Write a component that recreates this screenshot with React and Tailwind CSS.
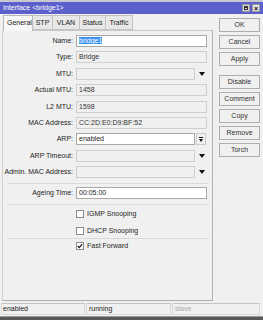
import React from "react";

function Arrow() {
  return (
    <svg width="6" height="4" viewBox="0 0 6 4" className="block">
      <path d="M0 0H6L3 4Z" fill="#111" />
    </svg>
  );
}

function Label({ children }) {
  return (
    <div className="w-[70px] shrink-0 text-right text-[7px] leading-[12px] text-[#1e1e1e] whitespace-nowrap">
      {children}
    </div>
  );
}

function RoField({ children, w = "w-[131px]" }) {
  return (
    <div className={`${w} h-[12px] border border-[#cfcfcf] bg-[#f0f0f0] text-[7px] leading-[10px] pl-[2px] text-[#333]`}>
      {children}
    </div>
  );
}

function Row({ label, children }) {
  return (
    <div className="flex items-center h-[12px]">
      <Label>{label}</Label>
      <div className="ml-[3px] flex items-center">{children}</div>
    </div>
  );
}

function Btn({ children }) {
  return (
    <div className="w-[41px] h-[14px] border border-[#adadad] bg-[#f0f0f0] text-[7px] leading-[12px] text-center text-[#333]">
      {children}
    </div>
  );
}

function Check({ checked, label }) {
  return (
    <div className="flex items-center h-[10px] pl-[73px]">
      <div className="w-[8px] h-[8px] border border-[#8c8c8c] bg-white flex items-center justify-center">
        {checked && (
          <svg width="6" height="6" viewBox="0 0 6 6" className="block">
            <path d="M0.8 3L2.3 4.6L5.2 1.2" stroke="#111" strokeWidth="1.2" fill="none" />
          </svg>
        )}
      </div>
      <span className="ml-[3px] text-[7px] leading-[10px] text-[#1e1e1e]">{label}</span>
    </div>
  );
}

function Sep({ className = "" }) {
  return <div className={`ml-[4px] w-[202px] h-px bg-[#dadada] ${className}`} />;
}

export default function App() {
  return (
    <div className="w-[263px] h-[320px] bg-[#f0f0f0] flex flex-col overflow-hidden font-['Liberation_Sans',Arial,sans-serif]">
      {/* title */}
      <div className="h-[2px] bg-[#c9c9d1]" />
      <div className="h-[12px] bg-[#5b60cc] flex items-center justify-between pl-[3px] pr-[3px]">
        <span className="text-white text-[7px] leading-[12px]">Interface &lt;bridge1&gt;</span>
        <div className="flex gap-[2px]">
          <div className="w-[8px] h-[8px] bg-[#d6d6d6] border border-[#9a9a9a] flex items-center justify-center">
            <div className="w-[4px] h-[4px] border border-[#333] border-t-2" />
          </div>
          <div className="w-[8px] h-[8px] bg-[#e4e4e4] border border-[#9a9a9a] flex items-center justify-center text-[7px] leading-none font-bold text-black">
            ×
          </div>
        </div>
      </div>

      <div className="flex flex-1 min-h-0">
        {/* left */}
        <div className="ml-[2px] w-[211px] flex flex-col">
          <div className="h-[16px] flex items-end pl-[1px]">
            <div className="h-[16px] px-[3px] border border-b-0 border-[#b9b9b9] bg-[#f7f7f7] text-[7px] leading-[14px] text-[#222] -mb-px relative z-10 w-[30px] text-center">General</div>
            <div className="h-[15px] w-[20px] border border-l-0 border-[#c3c3c3] bg-[#e8e8e8] text-[7px] leading-[14px] text-center text-[#222]">STP</div>
            <div className="h-[15px] w-[27px] border border-l-0 border-[#c3c3c3] bg-[#e8e8e8] text-[7px] leading-[14px] text-center text-[#222]">VLAN</div>
            <div className="h-[15px] w-[26px] border border-l-0 border-[#c3c3c3] bg-[#e8e8e8] text-[7px] leading-[14px] text-center text-[#222]">Status</div>
            <div className="h-[15px] w-[27px] border border-l-0 border-[#c3c3c3] bg-[#e8e8e8] text-[7px] leading-[14px] text-center text-[#222]">Traffic</div>
          </div>
          <div className="flex-1 border border-[#b0b0b0] border-l-[#d0d0d0] border-t-[#c8c8c8] flex flex-col pt-[4px]">
            <div className="flex flex-col gap-[4.4px]">
              <Row label="Name:">
                <div className="w-[131px] h-[12px] border border-[#a9a9a9] bg-white text-[7px] leading-[10px] pl-[2px]">
                  <span className="bg-[#3390ee] text-white">bridge1</span>
                </div>
              </Row>
              <Row label="Type:">
                <RoField>Bridge</RoField>
              </Row>
              <Row label="MTU:">
                <RoField w="w-[119px]" />
                <div className="ml-[4px]"><Arrow /></div>
              </Row>
              <Row label="Actual MTU:">
                <RoField>1458</RoField>
              </Row>
              <Row label="L2 MTU:">
                <RoField>1598</RoField>
              </Row>
              <Row label="MAC Address:">
                <RoField>CC:2D:E0:D9:BF:52</RoField>
              </Row>
              <Row label="ARP:">
                <div className="w-[119px] h-[12px] border border-[#a9a9a9] bg-white text-[7px] leading-[10px] pl-[2px] text-[#222]">enabled</div>
                <div className="ml-[1px] w-[10px] h-[12px] border border-[#c9c9c9] bg-[#f0f0f0] flex flex-col items-center justify-center gap-[1px]">
                  <div className="w-[4px] h-px bg-[#111]" />
                  <svg width="4" height="3" viewBox="0 0 4 3" className="block"><path d="M0 0H4L2 3Z" fill="#111" /></svg>
                </div>
              </Row>
              <Row label="ARP Timeout:">
                <RoField w="w-[119px]" />
                <div className="ml-[4px]"><Arrow /></div>
              </Row>
              <Row label="Admin. MAC Address:">
                <RoField w="w-[119px]" />
                <div className="ml-[4px]"><Arrow /></div>
              </Row>
            </div>
            <Sep className="mt-[5px]" />
            <div className="mt-[3px]">
              <Row label="Ageing Time:">
                <div className="w-[131px] h-[12px] border border-[#a9a9a9] bg-white text-[7px] leading-[10px] pl-[2px] text-[#222]">00:05:00</div>
              </Row>
            </div>
            <Sep className="mt-[5px]" />
            <div className="mt-[4px]"><Check label="IGMP Snooping" /></div>
            <div className="mt-[7px]"><Check label="DHCP Snooping" /></div>
            <Sep className="mt-[2px]" />
            <div className="mt-[2px]"><Check checked label="Fast Forward" /></div>
          </div>
        </div>

        {/* right buttons */}
        <div className="ml-[6px] pt-[4px] flex flex-col gap-[3px]">
          <Btn>OK</Btn>
          <Btn>Cancel</Btn>
          <Btn>Apply</Btn>
          <div className="h-[3px]" />
          <Btn>Disable</Btn>
          <Btn>Comment</Btn>
          <Btn>Copy</Btn>
          <Btn>Remove</Btn>
          <Btn>Torch</Btn>
        </div>
      </div>

      {/* status bar */}
      <div className="h-[15px] flex items-center gap-[1px] px-[1px] pt-[1px]">
        <div className="w-[84px] h-[12px] border border-[#d9d9d9] border-t-[#c4c4c4] text-[7px] leading-[10px] pl-[1px] text-[#222]">enabled</div>
        <div className="w-[85px] h-[12px] border border-[#d9d9d9] border-t-[#c4c4c4] text-[7px] leading-[10px] pl-[2px] text-[#222]">running</div>
        <div className="w-[88px] h-[12px] border border-[#d9d9d9] border-t-[#c4c4c4] text-[7px] leading-[10px] pl-[2px] text-[#a8a8a8]">slave</div>
      </div>
      <div className="h-px bg-[#9a9a9a]" />
      <div className="h-[3px] bg-[#585858]" />
    </div>
  );
}
